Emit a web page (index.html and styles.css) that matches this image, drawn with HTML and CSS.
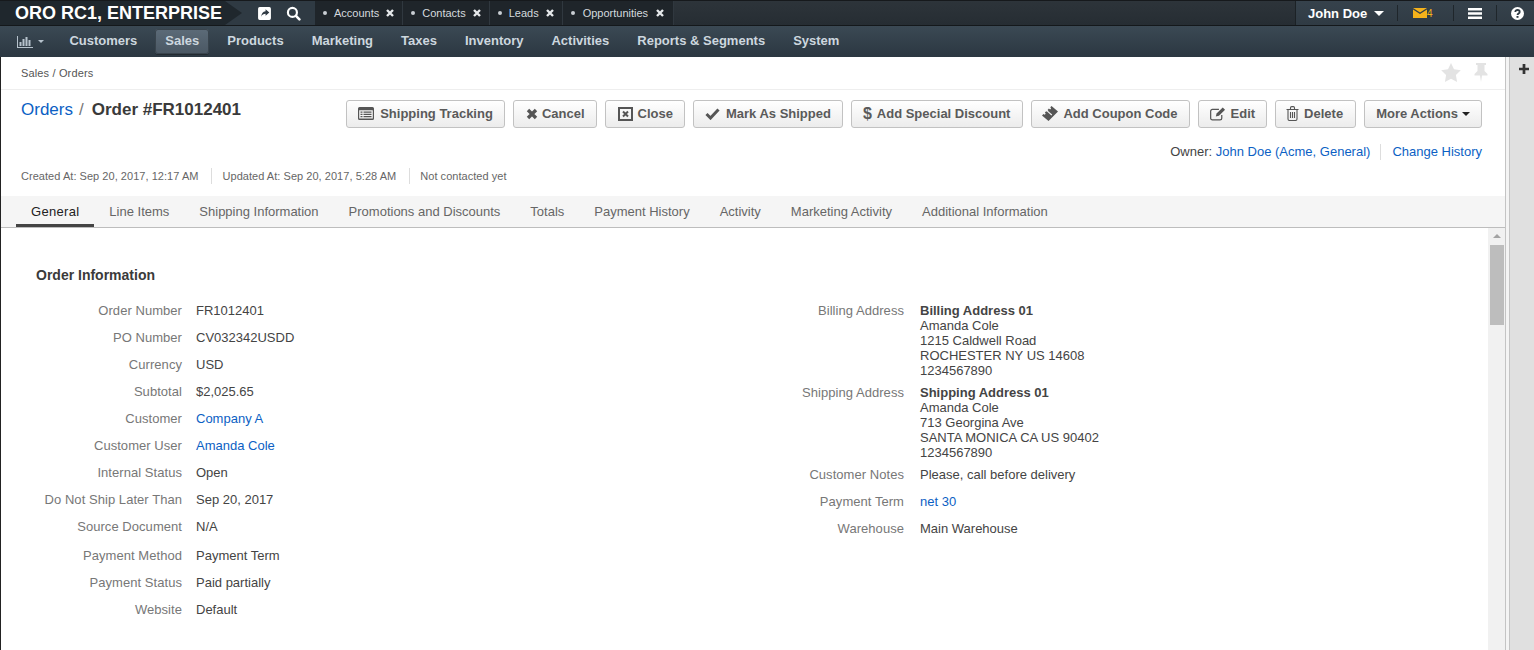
FILE: index.html
```html
<!DOCTYPE html>
<html lang="en">

<head>
  <meta charset="UTF-8">
  <title>Order #FR1012401 - Orders - Sales</title>
  <link rel="stylesheet" href="styles.css">
</head>

<body>
  <header class="topbar">
    <a class="logo">ORO RC1, ENTERPRISE</a>
    <div class="quick">
      <svg class="qicon" viewBox="0 0 14 14"><path fill="#fff" d="M2.500 1h9A1.500 1.500 0 0 1 13 2.500v9a1.500 1.500 0 0 1-1.500 1.500h-9A1.500 1.500 0 0 1 1 11.500v-9A1.500 1.500 0 0 1 2.500 1z"/><path fill="#2f3a43" d="M8 3l3.500 3L8 9V7.300C6 7.300 4.800 8 4 10c0-3 1.500-5 4-5.200z"/></svg>
      <svg class="qicon" viewBox="0 0 14 14"><circle cx="6" cy="6" r="4.200" fill="none" stroke="#fff" stroke-width="2"/><path stroke="#fff" stroke-width="2.400" stroke-linecap="round" d="M9.300 9.300l3.200 3.200"/></svg>
    </div>
    <ul class="pins">
      <li><i></i>Accounts<svg class="xicon" viewBox="0 0 10 10"><path d="M2 2l6 6M8 2l-6 6"/></svg></li>
      <li><i></i>Contacts<svg class="xicon" viewBox="0 0 10 10"><path d="M2 2l6 6M8 2l-6 6"/></svg></li>
      <li><i></i>Leads<svg class="xicon" viewBox="0 0 10 10"><path d="M2 2l6 6M8 2l-6 6"/></svg></li>
      <li><i></i>Opportunities<svg class="xicon" viewBox="0 0 10 10"><path d="M2 2l6 6M8 2l-6 6"/></svg></li>
    </ul>
    <div class="user">
      <div class="user-name">John Doe<b class="caret"></b></div>
      <div class="user-item mail">
        <svg width="14" height="10" viewBox="0 0 14 10"><path fill="#f5b21b" d="M0 0h14L7 4.500zM0 1.600l7 4.500 7-4.500V10H0z"/></svg>
        <span>4</span>
      </div>
      <div class="user-item menu"><svg width="14" height="11" viewBox="0 0 14 11"><path fill="#fff" d="M0 0h14v2.500H0zM0 4.200h14v2.500H0zM0 8.400h14v2.500H0z"/></svg></div>
      <div class="user-item help"><svg width="13" height="13" viewBox="0 0 13 13"><circle cx="6.500" cy="6.500" r="6.500" fill="#fff"/><path fill="none" stroke="#2f3a43" stroke-width="1.800" d="M4.300 5c0-1.300 1-2 2.200-2s2.200.7 2.200 1.900c0 1.500-2.200 1.500-2.200 3"/><rect x="5.500" y="9" width="2" height="1.800" fill="#2f3a43"/></svg></div>
    </div>
  </header>

  <nav class="navbar">
    <a class="nav-dash"><svg width="16" height="12" viewBox="0 0 16 12"><path fill="#b6c2cc" d="M0 0h1v11h15v1H0zM2.500 6h2v4h-2zM5.500 3h2v7h-2zM8.500 1h2v9h-2zM11.500 4h2v6h-2z"/></svg><b class="caret small"></b></a>
    <a class="nav-link">Customers</a>
    <a class="nav-link active">Sales</a>
    <a class="nav-link">Products</a>
    <a class="nav-link">Marketing</a>
    <a class="nav-link">Taxes</a>
    <a class="nav-link">Inventory</a>
    <a class="nav-link">Activities</a>
    <a class="nav-link">Reports &amp; Segments</a>
    <a class="nav-link">System</a>
  </nav>

  <div class="layout">
    <main class="main">
      <div class="crumbs">
        <span>Sales / Orders</span>
        <div class="crumb-icons">
          <svg width="20" height="19" viewBox="0 0 20 19"><path fill="#e3e3e3" d="M10 0l3 6.300 6.800 1-4.900 4.800 1.200 6.900-6.100-3.300L3.900 19l1.200-6.900L.2 7.300l6.800-1z"/></svg>
          <svg width="14" height="19" viewBox="0 0 14 19"><path fill="#e3e3e3" d="M2 0h10v2h-1.500v6L13.500 11v1.500H8L7 19l-1-6.500H.5V11l3-3V2H2z"/></svg>
        </div>
      </div>

      <div class="head">
        <h1 class="title"><a>Orders</a><span class="slash">/</span><b>Order #FR1012401</b></h1>
        <div class="actions">
          <a class="btn wide-gap"><svg width="16" height="13" viewBox="0 0 16 13"><path fill="#555" d="M1.500 0h13A1.500 1.500 0 0 1 16 1.500v10a1.500 1.500 0 0 1-1.500 1.500h-13A1.500 1.500 0 0 1 0 11.500v-10A1.500 1.500 0 0 1 1.500 0zM1.200 3.200v8.300h13.600V3.200z"/><path fill="#555" d="M2.500 4.500h2v1.300h-2zM5.500 4.500h8v1.300h-8zM2.500 6.800h2v1.300h-2zM5.500 6.800h8v1.300h-8zM2.500 9h2v1.300h-2zM5.500 9h8v1.300h-8z"/></svg>Shipping Tracking</a>
          <a class="btn btn-cancel"><svg width="12" height="12" viewBox="0 0 12 12"><path stroke="#555" stroke-width="3.400" d="M2 2l8 8M10 2l-8 8"/></svg>Cancel</a>
          <a class="btn btn-close"><svg width="15" height="14" viewBox="0 0 15 14"><path fill="#555" d="M0 0h15v14H0zM2 2v10h11V2z"/><path stroke="#555" stroke-width="2" d="M5 4.500l5 5M10 4.500l-5 5"/></svg>Close</a>
          <a class="btn wide-gap"><svg width="15" height="12" viewBox="0 0 15 12"><path fill="none" stroke="#555" stroke-width="3" d="M1.500 6l4 4 8-8.500"/></svg>Mark As Shipped</a>
          <a class="btn btn-dollar"><span class="dollar">$</span>Add Special Discount</a>
          <a class="btn btn-coupon"><svg width="16" height="15" viewBox="0 0 16 15"><path fill="#555" d="M9.500 0L16 5.500 6.500 15 0 9.500l1.500-1.500 1.200.8 1-1-.8-1.200 1.300-1.300 1.200.8 1-1-.8-1.200 1.300-1.300 1.200.8 1-1-.8-1.200z"/><path stroke="#f4f4f4" stroke-width="1.200" d="M5.600 5.400l4.200 3.600"/></svg>Add Coupon Code</a>
          <a class="btn"><svg width="16" height="15" viewBox="0 0 17 15"><path fill="none" stroke="#555" stroke-width="1.300" d="M12.500 9v3.500a1.800 1.800 0 0 1-1.800 1.800H2.500a1.800 1.800 0 0 1-1.800-1.800V5a1.800 1.800 0 0 1 1.800-1.800h7"/><path fill="#555" d="M13.500 1l2.500 2.500-6.500 6.500-3.300.8.800-3.300z"/></svg>Edit</a>
          <a class="btn btn-delete"><svg width="13" height="15" viewBox="0 0 13 15"><path fill="none" stroke="#555" stroke-width="1.100" d="M2 4v9a1.500 1.500 0 0 0 1.500 1.500h6A1.500 1.500 0 0 0 11 13V4M.5 3.500h12M4.500 3.500V1.800A1.200 1.200 0 0 1 5.700.6h1.600a1.200 1.200 0 0 1 1.200 1.200v1.700M4.500 6v6M6.500 6v6M8.500 6v6"/></svg>Delete</a>
          <a class="btn btn-more">More Actions<b class="caret dark"></b></a>
        </div>
      </div>

      <div class="owner-row">
        <span class="owner">Owner: <a>John Doe (Acme, General)</a></span>
        <a class="history">Change History</a>
      </div>

      <div class="meta">
        <span>Created At: Sep 20, 2017, 12:17 AM</span>
        <span>Updated At: Sep 20, 2017, 5:28 AM</span>
        <span>Not contacted yet</span>
      </div>

      <div class="tabs">
        <a class="tab active">General</a>
        <a class="tab">Line Items</a>
        <a class="tab">Shipping Information</a>
        <a class="tab">Promotions and Discounts</a>
        <a class="tab">Totals</a>
        <a class="tab">Payment History</a>
        <a class="tab">Activity</a>
        <a class="tab">Marketing Activity</a>
        <a class="tab">Additional Information</a>
      </div>

      <div class="scroller">
        <section class="content">
          <h2 class="section-title">Order Information</h2>
          <div class="columns">
            <dl class="fields left">
              <div class="field"><dt>Order Number</dt><dd>FR1012401</dd></div>
              <div class="field"><dt>PO Number</dt><dd>CV032342USDD</dd></div>
              <div class="field"><dt>Currency</dt><dd>USD</dd></div>
              <div class="field"><dt>Subtotal</dt><dd>$2,025.65</dd></div>
              <div class="field"><dt>Customer</dt><dd><a>Company A</a></dd></div>
              <div class="field"><dt>Customer User</dt><dd><a>Amanda Cole</a></dd></div>
              <div class="field"><dt>Internal Status</dt><dd>Open</dd></div>
              <div class="field"><dt>Do Not Ship Later Than</dt><dd>Sep 20, 2017</dd></div>
              <div class="field tall"><dt>Source Document</dt><dd>N/A</dd></div>
              <div class="field"><dt>Payment Method</dt><dd>Payment Term</dd></div>
              <div class="field"><dt>Payment Status</dt><dd>Paid partially</dd></div>
              <div class="field"><dt>Website</dt><dd>Default</dd></div>
            </dl>
            <dl class="fields right">
              <div class="field addr"><dt>Billing Address</dt><dd><b>Billing Address 01</b><br>Amanda Cole<br>1215 Caldwell Road<br>ROCHESTER NY US 14608<br>1234567890</dd></div>
              <div class="field addr"><dt>Shipping Address</dt><dd><b>Shipping Address 01</b><br>Amanda Cole<br>713 Georgina Ave<br>SANTA MONICA CA US 90402<br>1234567890</dd></div>
              <div class="field"><dt>Customer Notes</dt><dd>Please, call before delivery</dd></div>
              <div class="field"><dt>Payment Term</dt><dd><a>net 30</a></dd></div>
              <div class="field"><dt>Warehouse</dt><dd>Main Warehouse</dd></div>
            </dl>
          </div>
        </section>
        <div class="scrollbar">
          <b class="scroll-up"></b>
          <div class="scroll-thumb"></div>
        </div>
      </div>
    </main>

    <aside class="sidebar">
      <svg class="plus" width="10" height="10" viewBox="0 0 11 11"><path fill="#333" d="M4 0h3v4h4v3H7v4H4V7H0V4h4z"/></svg>
    </aside>
  </div>
</body>

</html>
```

FILE: styles.css
```css
* {
  box-sizing: border-box;
  margin: 0;
  padding: 0;
}

html, body {
  height: 650px;
  overflow: hidden;
}

body {
  font-family: "Liberation Sans", Arial, sans-serif;
  font-size: 14px;
  color: #444;
  background: #fff;
  display: flex;
  flex-direction: column;
}

a {
  color: #0c5fc4;
  text-decoration: none;
}

.caret {
  display: inline-block;
  width: 0;
  height: 0;
  margin-left: 7px;
  vertical-align: 2px;
  border-top: 5px solid #fff;
  border-left: 5px solid transparent;
  border-right: 5px solid transparent;
}

.caret.small {
  margin-left: 5px;
  border-top: 3px solid #b6c2cc;
  border-left: 3.500px solid transparent;
  border-right: 3.500px solid transparent;
}

.caret.dark {
  margin-left: -1px;
  border-top: 4px solid #222;
  border-left: 4px solid transparent;
  border-right: 4px solid transparent;
}

/* top bar */
.topbar {
  height: 26px;
  flex: none;
  display: flex;
  align-items: stretch;
  background: linear-gradient(#2d343a, #262d33);
  border-top: 1px solid #16191c;
  border-bottom: 1px solid #14181b;
}

.logo {
  position: relative;
  width: 225px;
  padding-left: 15px;
  background: #1f272d;
  color: #fff;
  font-size: 18px;
  font-weight: bold;
  line-height: 24px;
  white-space: nowrap;
}

.logo:after {
  content: "";
  position: absolute;
  left: 225px;
  top: 0;
  border-left: 17px solid #1f272d;
  border-top: 12px solid transparent;
  border-bottom: 12px solid transparent;
}

.quick {
  width: 90px;
  background: #2f3a43;
  display: flex;
  align-items: center;
  padding-left: 32px;
  gap: 14px;
}

.qicon {
  width: 15px;
  height: 15px;
}

.pins {
  display: flex;
  list-style: none;
  background: #1f252a;
}

.pins li {
  display: flex;
  align-items: center;
  height: 24px;
  padding: 0 7px 0 8px;
  color: #d5dade;
  font-size: 11px;
  border-right: 1px solid #30383f;
}

.pins li:last-child {
  padding-right: 8px;
}

.pins li:last-child i {
  margin-right: 8px;
}

.pins li:last-child .xicon {
  margin-left: 7px;
}

.pins i {
  width: 4px;
  height: 4px;
  margin-right: 7px;
  border-radius: 50%;
  background: #c9ced3;
}

.xicon {
  width: 10px;
  height: 10px;
  margin-left: 6px;
}

.xicon path {
  stroke: #e6e9eb;
  stroke-width: 2.400;
  fill: none;
}

.user {
  margin-left: auto;
  width: 239px;
  display: flex;
  align-items: center;
  background: linear-gradient(#36424c, #303b44);
  border-left: 1px solid #1c2226;
}

.user-name {
  width: 101px;
  padding-left: 12px;
  color: #fff;
  font-size: 13px;
  font-weight: bold;
  white-space: nowrap;
}

.user-item {
  height: 16px;
  display: flex;
  align-items: center;
  border-left: 1px solid #1f262b;
}

.mail {
  width: 56px;
  padding-left: 15px;
}

.mail span {
  font-size: 10px;
  color: #f5b21b;
}

.menu {
  width: 43px;
  padding-left: 14px;
}

.help {
  padding-left: 14px;
}

/* main navigation */
.navbar {
  height: 31px;
  flex: none;
  display: flex;
  align-items: center;
  padding-left: 6px;
  background: linear-gradient(#3b4954, #2b3741);
}

.nav-dash {
  width: 53.400px;
  padding-left: 11px;
  display: flex;
  align-items: center;
}

.nav-link {
  height: 25px;
  padding: 0 10px;
  margin-right: 8px;
  color: #cdd7df;
  font-size: 13px;
  font-weight: bold;
  line-height: 24px;
  border-radius: 3px;
}

.nav-link.active {
  background: linear-gradient(#5c6b78, #4a5763);
  box-shadow: inset 0 0 0 1px #39444d, 0 1px 0 #222a30;
}

/* page layout */
.layout {
  flex: 1;
  min-height: 0;
  display: flex;
}

.main {
  flex: 1;
  min-width: 0;
  display: flex;
  flex-direction: column;
  border-left: 1px solid #222;
}

.sidebar {
  width: 29px;
  flex: none;
  padding: 7px 0 0 13px;
  background: #e0e0e0;
  border-left: 1px solid #c4c4c4;
  box-shadow: inset 3px 0 0 #f4f4f4, inset 4px 0 0 #c4c4c4;
}

.plus {
  display: block;
}

.crumbs {
  height: 33px;
  flex: none;
  display: flex;
  align-items: center;
  justify-content: space-between;
  padding: 0 17px 0 20px;
  border-bottom: 1px solid #eee;
  font-size: 11px;
  letter-spacing: .15px;
  color: #555;
}

.crumb-icons {
  display: flex;
  gap: 13px;
  margin-bottom: 2px;
}

/* title and buttons */
.head {
  display: flex;
  justify-content: space-between;
  padding: 10px 23px 0 20px;
}

.title {
  font-size: 17px;
  font-weight: normal;
  line-height: 19px;
  white-space: nowrap;
}

.title b {
  color: #3a3a3a;
}

.slash {
  margin: 0 8px 0 6px;
  color: #777;
}

.actions {
  display: flex;
  gap: 8px;
}

.btn {
  height: 28px;
  display: flex;
  align-items: center;
  gap: 5px;
  padding: 0 11px 1px;
  color: #5a5a5a;
  font-size: 13px;
  font-weight: bold;
  white-space: nowrap;
  background: linear-gradient(#fff, #ececec);
  border: 1px solid #c2c2c2;
  border-radius: 3px;
}

.wide-gap {
  gap: 6px;
}

.btn-cancel {
  gap: 4px;
  padding-left: 12px;
}

.btn-close {
  padding-left: 12px;
}

.btn-dollar {
  gap: 5px;
  padding-right: 12px;
}

.btn-coupon {
  padding-left: 10px;
}

.btn-delete {
  padding-left: 10px;
  padding-right: 12px;
}

.dollar {
  font-size: 16px;
}

.owner-row {
  display: flex;
  justify-content: flex-end;
  align-items: center;
  padding: 16px 23px 0 0;
  font-size: 13px;
  line-height: 16px;
  color: #444;
}

.history {
  margin-left: 10px;
  padding-left: 11px;
  border-left: 1px solid #ddd;
}

.meta {
  display: flex;
  padding: 8px 0 0 20px;
  font-size: 11px;
  letter-spacing: .04px;
  line-height: 16px;
  color: #666;
}

.meta span + span {
  margin-left: 13px;
  padding-left: 10px;
  border-left: 1px solid #ddd;
}

/* tabs */
.tabs {
  height: 32px;
  flex: none;
  margin-top: 12px;
  display: flex;
  padding-left: 15px;
  background: #f5f5f5;
  border-bottom: 1px solid #bdbdbd;
}

.tab {
  height: 31px;
  padding: 0 15px;
  color: #666;
  font-size: 13px;
  line-height: 31px;
}

.tab.active {
  color: #222;
  letter-spacing: .3px;
  border-bottom: 3px solid #444;
}

/* scrolling content */
.scroller {
  flex: 1;
  min-height: 0;
  display: flex;
  overflow: hidden;
}

.content {
  flex: 1;
  min-width: 0;
  padding: 40px 0 0 35px;
}

.section-title {
  font-size: 14px;
  font-weight: bold;
  line-height: 15px;
  color: #3a3a3a;
}

.columns {
  display: flex;
  margin-top: 20px;
}

.fields {
  width: 722px;
  flex: none;
}

.field {
  display: flex;
  min-height: 27px;
  font-size: 13px;
  line-height: 15px;
}

.field.tall {
  min-height: 29px;
}

.field.addr {
  min-height: 82px;
}

.left dt {
  width: 146px;
}

.right dt {
  width: 146px;
}

dt {
  flex: none;
  text-align: right;
  letter-spacing: .05px;
  color: #777;
}

dd {
  margin-left: 14px;
  color: #444;
}

.right dd {
  margin-left: 16px;
}

.scrollbar {
  width: 17px;
  flex: none;
  background: #f1f1f1;
  padding: 6px 1px 0 2px;
}

.scroll-up {
  display: block;
  width: 0;
  height: 0;
  margin: 0 auto;
  border-bottom: 4px solid #a3a3a3;
  border-left: 4px solid transparent;
  border-right: 4px solid transparent;
}

.scroll-thumb {
  height: 80px;
  margin-top: 7px;
  background: #bdbdbd;
}
```
